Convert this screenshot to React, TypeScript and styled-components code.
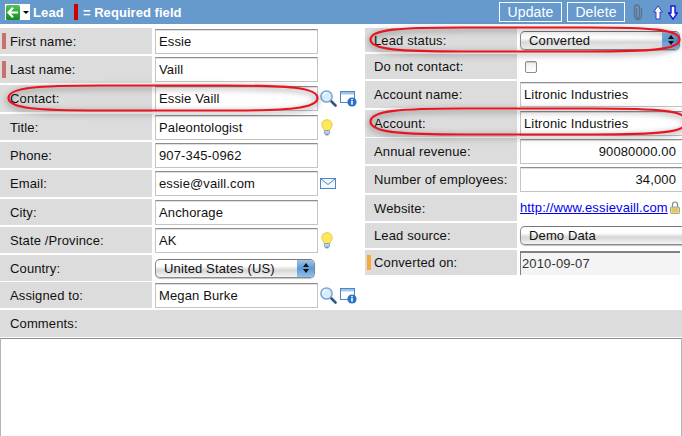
import React from 'react';
import styled, { createGlobalStyle } from 'styled-components';

const GlobalStyle = createGlobalStyle`
  html, body {
    margin: 0;
    padding: 0;
    background: #fff;
    font-family: "Liberation Sans", Arial, sans-serif;
  }
`;

const Page = styled.div`
  position: relative;
  width: 682px;
  height: 436px;
  overflow: hidden;
  font-size: 13px;
  letter-spacing: 0.13px;
  color: #111;
`;

const Header = styled.div`
  display: flex;
  align-items: center;
  height: 24px;
  padding: 0 4px 0 5px;
  box-sizing: border-box;
  background: #6699cc;
  color: #fff;
  font-size: 13px;
  font-weight: bold;
`;

const BackButton = styled.div`
  display: flex;
  align-items: center;
  box-sizing: border-box;
  width: 25px;
  height: 16px;
  padding-left: 1px;
  background: #fff;
  margin-right: 3px;
`;

const Caret = styled.span`
  width: 0;
  height: 0;
  margin-left: 3px;
  border-left: 3px solid transparent;
  border-right: 3px solid transparent;
  border-top: 3px solid #000;
`;

const RequiredBar = styled.span`
  width: 4px;
  height: 16px;
  margin: 0 5px 0 10px;
  background: #cc0000;
`;

const RequiredText = styled.span`
  letter-spacing: 0.05px;
`;

const Actions = styled.div`
  display: flex;
  align-items: center;
  margin-left: auto;
`;

const HeaderButton = styled.div<{ $width: number; $gap: number }>`
  display: flex;
  align-items: center;
  justify-content: center;
  box-sizing: border-box;
  width: ${(p) => p.$width}px;
  height: 20px;
  margin-right: ${(p) => p.$gap}px;
  border: 1px solid #fff;
  font-size: 14px;
  font-weight: normal;
`;

const IconGap = styled.span<{ $width: number }>`
  width: ${(p) => p.$width}px;
`;

const Form = styled.div`
  display: flex;
  height: 284px;
`;

const Column = styled.div<{ $width: number }>`
  display: flex;
  flex-direction: column;
  flex: none;
  box-sizing: border-box;
  width: ${(p) => p.$width}px;
  padding-top: 4px;
  gap: 2px;
`;

const Row = styled.div<{ $height: number; $tight?: boolean }>`
  display: flex;
  align-items: center;
  height: ${(p) => p.$height}px;
  margin-top: ${(p) => (p.$tight ? -1 : 0)}px;
`;

const Label = styled.div<{ $mark?: string; $pad?: number }>`
  position: relative;
  display: flex;
  align-items: center;
  flex: none;
  box-sizing: border-box;
  width: 152px;
  height: 100%;
  padding-left: ${(p) => p.$pad ?? 10}px;
  margin-right: 3px;
  background: #dcdcdc;

  &::before {
    content: '';
    display: ${(p) => (p.$mark ? 'block' : 'none')};
    position: absolute;
    left: 2px;
    top: 5px;
    bottom: 5px;
    width: 4px;
    background: ${(p) => p.$mark};
  }
`;

const TextInput = styled.input<{ $width?: number; $endPad?: number }>`
  flex: none;
  box-sizing: border-box;
  width: ${(p) => p.$width ?? 163}px;
  height: 25px;
  padding: 0 ${(p) => p.$endPad ?? 3}px 0 3px;
  margin: 0;
  outline: none;
  border: 1px solid #c4c4c4;
  border-top: 1px solid #8e8e8e;
  box-shadow: inset 0 1px 0 #e0e0e0;
  background: #fff;
  color: #111;
  font: 13px "Liberation Sans", Arial, sans-serif;
  letter-spacing: inherit;
  text-align: ${(p) => (p.$endPad ? 'right' : 'left')};
`;

const ReadOnlyInput = styled(TextInput)`
  width: 160px;
  height: 24px;
  padding: 0 1px;
  border: none;
  border-top: 2px solid #808080;
  border-left: 1px solid #808080;
  box-shadow: none;
  background: #f4f4f4;
  color: #333;
`;

const SelectBox = styled.div<{ $width: number }>`
  position: relative;
  flex: none;
  display: flex;
  align-items: center;
  box-sizing: border-box;
  width: ${(p) => p.$width}px;
  height: 19px;
  padding-left: 8px;
  border: 1px solid #8a8a8a;
  border-top-color: #777;
  border-radius: 5px;
  background: linear-gradient(#fff 0%, #fff 35%, #d6d6d6 60%, #f4f4f4 100%);
  box-shadow: 0 1px 1px rgba(0, 0, 0, 0.25);
  overflow: hidden;
`;

const Stepper = styled.span`
  position: absolute;
  top: 0;
  right: 0;
  bottom: 0;
  width: 17px;
  display: flex;
  flex-direction: column;
  align-items: center;
  justify-content: center;
  gap: 2px;
  background: linear-gradient(#9cc3ea 0%, #5f9ad8 50%, #8fc0ef 100%);

  &::before,
  &::after {
    content: '';
    width: 0;
    height: 0;
    border-left: 3px solid transparent;
    border-right: 3px solid transparent;
  }
  &::before {
    border-bottom: 4px solid #111;
  }
  &::after {
    border-top: 4px solid #111;
  }
`;

const Checkbox = styled.span`
  box-sizing: border-box;
  width: 12px;
  height: 12px;
  margin-left: 5px;
  border: 1px solid #8c8c8c;
  border-radius: 2px;
  background: linear-gradient(#f0f0f0, #fff);
  box-shadow: inset 0 1px 1px rgba(0, 0, 0, 0.15);
`;

const Icons = styled.div`
  display: flex;
  align-items: center;
  gap: 3px;
  margin-left: 2px;
`;

const BulbIcon = styled.svg`
  margin-left: 1px;
`;

const SiteLink = styled.a`
  color: #0000ee;
  text-decoration: underline;
  white-space: nowrap;
`;

const WebsiteField = styled.div`
  display: flex;
  align-items: center;
  gap: 2px;
  margin-top: -2px;
`;

const CommentsBar = styled.div`
  display: flex;
  align-items: center;
  height: 27px;
  margin-top: 2px;
  padding-left: 10px;
  background: #dcdcdc;
`;

const CommentsBox = styled.div`
  box-sizing: border-box;
  height: 100px;
  margin-top: 1px;
  border: 1px solid #b4b4b4;
  border-top-color: #8e8e8e;
  background: #fff;
`;

const Callout = styled.svg<{ $left: number; $top: number }>`
  position: absolute;
  left: ${(p) => p.$left}px;
  top: ${(p) => p.$top}px;
  overflow: visible;
  filter: drop-shadow(0 2px 3px rgba(0, 0, 0, 0.55));
  pointer-events: none;
`;

const CalloutStroke = ({ w, h }: { w: number; h: number }) => (
  <path
    d={`M1.500 ${h / 2} C1.500 ${h * 0.12} ${w * 0.1} 1.500 ${w * 0.3} 1.500 L${w * 0.7} 1.500
        C${w * 0.9} 1.500 ${w - 1.500} ${h * 0.12} ${w - 1.500} ${h / 2}
        C${w - 1.500} ${h * 0.88} ${w * 0.9} ${h - 1.500} ${w * 0.7} ${h - 1.500} L${w * 0.3} ${h - 1.500}
        C${w * 0.1} ${h - 1.500} 1.500 ${h * 0.88} 1.500 ${h / 2}Z`}
    fill="none"
    stroke="#ea1420"
    strokeWidth="2.200"
  />
);

const Magnifier = () => (
  <svg width="17" height="17" viewBox="0 0 17 17">
    <path d="M11 11L15.500 15.500" stroke="#34577f" strokeWidth="2.600" strokeLinecap="round" />
    <circle cx="6.500" cy="6.500" r="5.600" fill="#d8ecfb" stroke="#78a6d2" strokeWidth="1.500" />
    <path d="M3.200 6a3.300 3.300 0 0 1 3.300-3.300" stroke="#fff" strokeWidth="1.300" fill="none" />
  </svg>
);

const InfoWindow = () => (
  <svg width="17" height="17" viewBox="0 0 17 17">
    <rect x="0.500" y="1.500" width="14" height="11" fill="#fff" stroke="#4d86c6" />
    <rect x="1" y="2" width="13" height="2.400" fill="#9cc3ea" />
    <circle cx="12" cy="12" r="4.600" fill="#2a72c4" />
    <rect x="11.200" y="11" width="1.600" height="3.600" fill="#fff" />
    <rect x="11.200" y="8.900" width="1.600" height="1.400" fill="#fff" />
  </svg>
);

const Bulb = () => (
  <BulbIcon width="12" height="17" viewBox="0 0 12 17">
    <path
      d="M6 .7C2.800.7.800 3 .800 5.500c0 2.400 2 3.700 2.400 6h5.600c.4-2.300 2.400-3.600 2.400-6C11.200 3 9.200.7 6 .7z"
      fill="#fde95c"
      stroke="#e0bb3a"
      strokeWidth=".8"
    />
    <rect x="3.400" y="11.500" width="5.200" height="3.500" rx="1" fill="#c3d3e6" stroke="#6f94bd" strokeWidth=".8" />
    <rect x="4.500" y="15" width="3" height="1.400" fill="#6f94bd" />
  </BulbIcon>
);

const Mail = () => (
  <svg width="16" height="11" viewBox="0 0 16 11">
    <rect x="0.500" y="0.500" width="15" height="10" fill="#f2f7fc" stroke="#4d86c6" />
    <path d="M.5.500L8 6.500L15.500.500" fill="none" stroke="#4d86c6" />
  </svg>
);

const Lock = () => (
  <svg width="10" height="13" viewBox="0 0 10 13">
    <path d="M2.500 6V3.500a2.500 2.500 0 0 1 5 0V6" fill="none" stroke="#7f8a98" strokeWidth="1.200" />
    <rect x="0.500" y="6" width="9" height="6.500" rx="1" fill="#f0d878" stroke="#8a94a0" strokeWidth=".8" />
    <path d="M2 8h6M2 10h6" stroke="#c4a94a" strokeWidth=".7" />
  </svg>
);

const BackIcon = () => (
  <svg width="14" height="15" viewBox="0 0 14 15">
    <defs>
      <linearGradient id="backGreen" x1="0" y1="0" x2="0" y2="1">
        <stop offset="0" stopColor="#55c455" />
        <stop offset="1" stopColor="#128a22" />
      </linearGradient>
    </defs>
    <rect width="14" height="15" rx="1.500" fill="url(#backGreen)" />
    <path d="M7 2.800L2.500 7.500L7 12.200M3 7.500H12" fill="none" stroke="#fff" strokeWidth="2.200" />
  </svg>
);

const Paperclip = () => (
  <svg width="10" height="17" viewBox="0 0 10 17">
    <path
      d="M3.500 4.500V12.500a1.500 1.500 0 0 0 3 0V3.500a2.500 2.500 0 0 0-5 0V12a3.500 3.500 0 0 0 7 0V4"
      fill="none"
      stroke="#5f7188"
      strokeWidth="1.300"
    />
  </svg>
);

const ArrowUp = () => (
  <svg width="10" height="15" viewBox="0 0 10 15">
    <path d="M5 .9L9.300 7H7V14H3V7H.7z" fill="#fff" stroke="#2a2ad0" strokeWidth=".9" />
  </svg>
);

const ArrowDown = () => (
  <svg width="10" height="15" viewBox="0 0 10 15">
    <path d="M5 14.100L9.300 8H7V1H3V8H.7z" fill="#fff" stroke="#1414e0" strokeWidth="1.400" />
  </svg>
);

const RED = '#c97070';

const App = () => {
  return (
    <Page>
      <GlobalStyle />
      <Header>
        <BackButton>
          <BackIcon />
          <Caret />
        </BackButton>
        <span>Lead</span>
        <RequiredBar />
        <RequiredText>= Required field</RequiredText>
        <Actions>
          <HeaderButton $width={63} $gap={5}>Update</HeaderButton>
          <HeaderButton $width={58} $gap={8}>Delete</HeaderButton>
          <Paperclip />
          <IconGap $width={10} />
          <ArrowUp />
          <IconGap $width={5} />
          <ArrowDown />
        </Actions>
      </Header>
      <Form>
        <Column $width={365}>
          <Row $height={26}>
            <Label $mark={RED}>First name:</Label>
            <TextInput readOnly value="Essie" />
          </Row>
          <Row $height={27}>
            <Label $mark={RED}>Last name:</Label>
            <TextInput readOnly value="Vaill" />
          </Row>
          <Row $height={27}>
            <Label>Contact:</Label>
            <TextInput readOnly value="Essie Vaill" />
            <Icons>
              <Magnifier />
              <InfoWindow />
            </Icons>
          </Row>
          <Row $height={26}>
            <Label>Title:</Label>
            <TextInput readOnly value="Paleontologist" />
            <Icons>
              <Bulb />
            </Icons>
          </Row>
          <Row $height={26}>
            <Label>Phone:</Label>
            <TextInput readOnly value="907-345-0962" />
          </Row>
          <Row $height={27}>
            <Label>Email:</Label>
            <TextInput readOnly value="essie@vaill.com" />
            <Icons>
              <Mail />
            </Icons>
          </Row>
          <Row $height={26}>
            <Label>City:</Label>
            <TextInput readOnly value="Anchorage" />
          </Row>
          <Row $height={26}>
            <Label>State /Province:</Label>
            <TextInput readOnly value="AK" />
            <Icons>
              <Bulb />
            </Icons>
          </Row>
          <Row $height={26}>
            <Label>Country:</Label>
            <SelectBox $width={160}>
              United States (US)
              <Stepper />
            </SelectBox>
          </Row>
          <Row $height={26} $tight>
            <Label>Assigned to:</Label>
            <TextInput readOnly value="Megan Burke" />
            <Icons>
              <Magnifier />
              <InfoWindow />
            </Icons>
          </Row>
        </Column>
        <Column $width={317}>
          <Row $height={24}>
            <Label $pad={9}>Lead status:</Label>
            <SelectBox $width={160}>
              Converted
              <Stepper />
            </SelectBox>
          </Row>
          <Row $height={25}>
            <Label $pad={9}>Do not contact:</Label>
            <Checkbox />
          </Row>
          <Row $height={27}>
            <Label $pad={9}>Account name:</Label>
            <TextInput readOnly value="Litronic Industries" />
          </Row>
          <Row $height={27}>
            <Label $pad={9}>Account:</Label>
            <TextInput readOnly value="Litronic Industries" />
          </Row>
          <Row $height={26} $tight>
            <Label $pad={9}>Annual revenue:</Label>
            <TextInput readOnly value="90080000.00" $width={170} $endPad={13} />
          </Row>
          <Row $height={27}>
            <Label $pad={9}>Number of employees:</Label>
            <TextInput readOnly value="34,000" $width={170} $endPad={13} />
          </Row>
          <Row $height={26}>
            <Label $pad={9}>Website:</Label>
            <WebsiteField>
              <SiteLink href="#">http://www.essievaill.com</SiteLink>
              <Lock />
            </WebsiteField>
          </Row>
          <Row $height={25}>
            <Label $pad={9}>Lead source:</Label>
            <SelectBox $width={180}>Demo Data</SelectBox>
          </Row>
          <Row $height={25}>
            <Label $pad={9} $mark="#f5a83c">Converted on:</Label>
            <ReadOnlyInput readOnly value="2010-09-07" />
          </Row>
        </Column>
      </Form>
      <CommentsBar>Comments:</CommentsBar>
      <CommentsBox />
      <Callout $left={7} $top={84} width="312" height="28" viewBox="0 0 312 28">
        <CalloutStroke w={312} h={28} />
      </Callout>
      <Callout $left={369} $top={26} width="312" height="27" viewBox="0 0 312 27">
        <CalloutStroke w={312} h={27} />
      </Callout>
      <Callout $left={369} $top={107} width="320" height="29" viewBox="0 0 320 29">
        <CalloutStroke w={320} h={29} />
      </Callout>
    </Page>
  );
};

export default App;
